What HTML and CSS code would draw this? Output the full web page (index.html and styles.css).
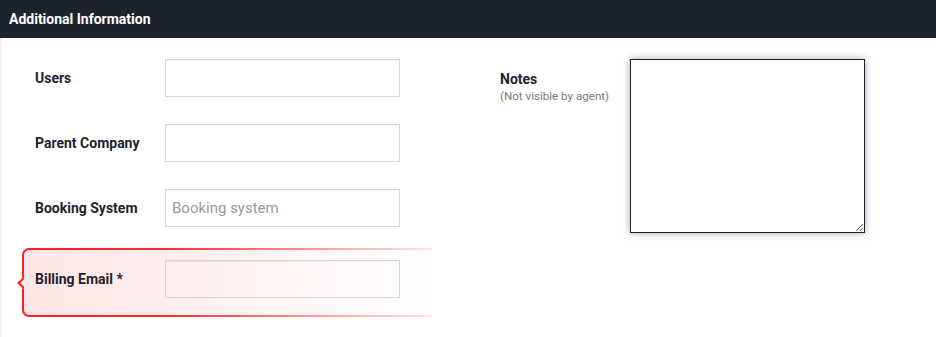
FILE: index.html
```html
<!DOCTYPE html>
<html lang="en">
<head>
    <meta charset="UTF-8">
    <meta name="viewport" content="width=device-width, initial-scale=1.0">
    <title>Additional Information</title>
    <link rel="stylesheet" href="styles.css">
</head>
<body>
    <div class="panel-header">Additional Information</div>
    <div class="panel-body">
        <div class="col-left">
            <div class="form-row">
                <label for="users">Users</label>
                <input type="text" id="users">
            </div>
            <div class="form-row">
                <label for="parentCompany">Parent Company</label>
                <input type="text" id="parentCompany">
            </div>
            <div class="form-row">
                <label for="bookingSystem">Booking System</label>
                <input type="text" id="bookingSystem" placeholder="Booking system">
            </div>
            <div class="error-frame">
                <div class="form-row has-error">
                    <label for="billingEmail">Billing Email *</label>
                    <input type="text" id="billingEmail">
                </div>
            </div>
        </div>
        <div class="col-right">
            <div class="notes-label">
                <label for="notes">Notes</label>
                <span class="hint">(Not visible by agent)</span>
            </div>
            <textarea id="notes"></textarea>
        </div>
    </div>
</body>
</html>
```

FILE: styles.css
```css
body {
    margin: 0;
    font-family: Roboto, "Liberation Sans", Arial, sans-serif;
    background-color: #fff;
    color: #1e2330;
}

.panel-header {
    height: 38px;
    line-height: 38px;
    padding-left: 9px;
    background-color: #1e2330;
    color: #fff;
    font-size: 14px;
    font-weight: 700;
}

.panel-body {
    display: flex;
    border-left: 2px solid #f3f3f3;
    height: 299px;
    box-sizing: border-box;
}

.col-left {
    width: 498px;
    padding-top: 7px;
}

.form-row {
    display: flex;
    align-items: center;
    height: 65px;
    padding-left: 33px;
    box-sizing: border-box;
}

label {
    width: 130px;
    font-size: 14px;
    font-weight: 700;
    color: #1e2330;
}

input {
    width: 235px;
    height: 38px;
    box-sizing: border-box;
    padding: 0 6px;
    font-family: inherit;
    font-size: 15px;
    border: 1px solid #d7d7d7;
    box-shadow: inset 0 1px 1px rgba(0, 0, 0, 0.05);
    background: transparent;
    outline: none;
}

input::placeholder {
    color: #9a9a9a;
}

.error-frame {
    position: relative;
    width: 408px;
    margin: 8px 0 0 20px;
    padding: 2px 0 2px 2px;
    border-radius: 7px 0 0 7px;
    background: linear-gradient(to right, #ff1f1f 0%, #ff2a2a 35%, #ffb3b3 80%, #ffe3e3 100%);
}

.error-frame::before {
    content: "";
    position: absolute;
    left: -3px;
    top: 31px;
    width: 6px;
    height: 6px;
    background: #ffe6e6;
    border-left: 2px solid #ff1f1f;
    border-bottom: 2px solid #ff1f1f;
    transform: rotate(45deg);
}

.has-error {
    position: relative;
    height: 65px;
    align-items: flex-start;
    padding: 10px 0 0 11px;
    border-radius: 5px 0 0 5px;
    background: linear-gradient(to right, #ffe6e6 0%, #fff0f0 45%, #fffafa 80%, #fff 100%);
}

.has-error label {
    line-height: 38px;
}

.col-right {
    display: flex;
    padding-top: 21px;
}

.notes-label {
    width: 130px;
    padding-top: 12px;
}

.notes-label label {
    display: block;
    line-height: 16px;
}

.hint {
    display: block;
    margin-top: 2px;
    font-size: 11.6px;
    color: #7a7a7a;
}

textarea {
    width: 235px;
    height: 174px;
    box-sizing: border-box;
    border: 1.5px solid #1e2330;
    box-shadow: 0 0 7px rgba(0, 0, 0, 0.35);
    font-family: inherit;
    font-size: 14px;
    outline: none;
}
```
